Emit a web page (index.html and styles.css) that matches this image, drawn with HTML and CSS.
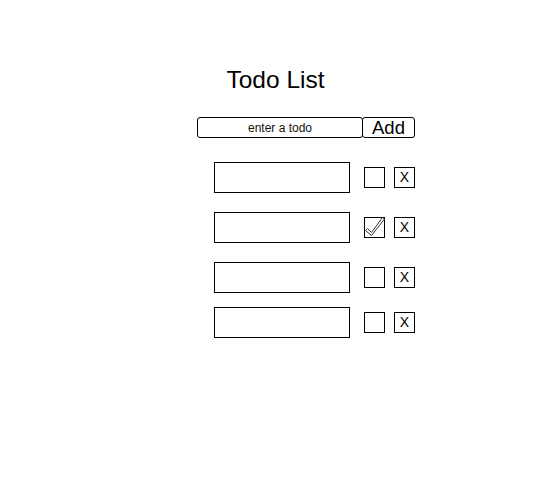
FILE: index.html
```html
<!DOCTYPE html>
<html>
<head>
<meta charset="utf-8">
<link rel="stylesheet" href="styles.css">
</head>
<body>
<div class="app">
  <h1 class="title">Todo List</h1>
  <form class="add-form">
    <input class="add-input" type="text" placeholder="enter a todo">
    <button class="add-btn" type="button">Add</button>
  </form>
  <ul class="todos">
    <li class="todo">
      <div class="todo-text"></div>
      <span class="check"></span>
      <button class="del" type="button">X</button>
    </li>
    <li class="todo">
      <div class="todo-text"></div>
      <span class="check">
        <svg width="22" height="22" viewBox="0 0 22 22"><path d="M1.5 14.5 L3.5 12.5 L7.5 16.5 L18.5 1.5 L20.5 3 L7.5 19.5 Z" fill="#fff" stroke="#333" stroke-width="1" stroke-linejoin="round"/></svg>
      </span>
      <button class="del" type="button">X</button>
    </li>
    <li class="todo todo-tight">
      <div class="todo-text"></div>
      <span class="check"></span>
      <button class="del" type="button">X</button>
    </li>
    <li class="todo">
      <div class="todo-text"></div>
      <span class="check"></span>
      <button class="del" type="button">X</button>
    </li>
  </ul>
</div>
</body>
</html>
```
FILE: styles.css
```css
html, body {
  margin: 0;
  padding: 0;
  background: #fff;
}
body {
  font-family: "Liberation Sans", Arial, sans-serif;
  color: #000;
}
.app {
  width: 551px;
  padding-top: 66px;
}
.title {
  margin: 0;
  font-size: 24.5px;
  font-weight: normal;
  line-height: 28px;
  text-align: center;
}
.add-form {
  display: flex;
  margin: 23px 0 0 197px;
  height: 21px;
}
.add-input {
  box-sizing: border-box;
  width: 166px;
  height: 21px;
  margin: 0;
  padding: 0;
  border: 1px solid #000;
  border-radius: 3px;
  font-family: "Liberation Sans", Arial, sans-serif;
  font-size: 12px;
  text-align: center;
  outline: none;
}
.add-input::placeholder {
  color: #111;
  opacity: 1;
}
.add-btn {
  box-sizing: border-box;
  width: 53px;
  height: 21px;
  margin: 0 0 0 -1px;
  padding: 0;
  border: 1px solid #000;
  border-radius: 3px;
  background: #fff;
  font-family: "Liberation Sans", Arial, sans-serif;
  font-size: 18.5px;
  line-height: 18px;
  color: #000;
}
.todos {
  list-style: none;
  margin: 24px 0 0 214px;
  padding: 0;
}
.todo {
  display: flex;
  align-items: center;
  height: 31px;
  margin-bottom: 19px;
}
.todo-tight {
  margin-bottom: 14px;
}
.todo-text {
  box-sizing: border-box;
  width: 136px;
  height: 31px;
  border: 1px solid #000;
}
.check {
  box-sizing: border-box;
  position: relative;
  width: 21px;
  height: 21px;
  margin-left: 14px;
  border: 1px solid #000;
  background: #fff;
}
.check svg {
  position: absolute;
  left: -1px;
  top: -2px;
}
.del {
  box-sizing: border-box;
  width: 21px;
  height: 21px;
  margin: 0 0 0 9px;
  padding: 0;
  border: 1px solid #000;
  background: #fff;
  font-family: "Liberation Sans", Arial, sans-serif;
  font-size: 14px;
  line-height: 19px;
  color: #000;
  text-align: center;
}
```
